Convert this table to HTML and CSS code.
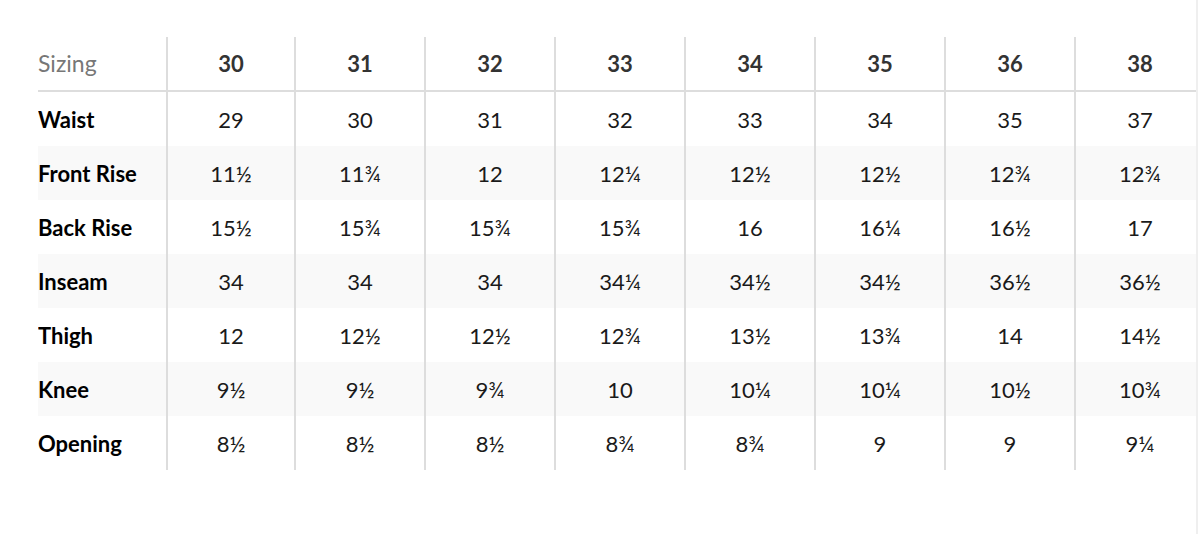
FILE: index.html
```html
<!DOCTYPE html>
<html lang="en">
<head>
<meta charset="utf-8">
<title>Sizing</title>
<link rel="stylesheet" href="styles.css">
</head>
<body>
<div class="page">
  <div class="wrap">
    <table class="size-table">
      <colgroup>
        <col class="c-label"><col class="c-first"><col class="c-num"><col class="c-num"><col class="c-num"><col class="c-num"><col class="c-num"><col class="c-num"><col class="c-num">
      </colgroup>
      <thead>
        <tr>
          <th class="label head-label">Sizing</th>
          <th>30</th><th>31</th><th>32</th><th>33</th><th>34</th><th>35</th><th>36</th><th>38</th>
        </tr>
      </thead>
      <tbody>
        <tr>
          <td class="label">Waist</td>
          <td>29</td><td>30</td><td>31</td><td>32</td><td>33</td><td>34</td><td>35</td><td>37</td>
        </tr>
        <tr>
          <td class="label">Front Rise</td>
          <td>11½</td><td>11¾</td><td>12</td><td>12¼</td><td>12½</td><td>12½</td><td>12¾</td><td>12¾</td>
        </tr>
        <tr>
          <td class="label">Back Rise</td>
          <td>15½</td><td>15¾</td><td>15¾</td><td>15¾</td><td>16</td><td>16¼</td><td>16½</td><td>17</td>
        </tr>
        <tr>
          <td class="label">Inseam</td>
          <td>34</td><td>34</td><td>34</td><td>34¼</td><td>34½</td><td>34½</td><td>36½</td><td>36½</td>
        </tr>
        <tr>
          <td class="label">Thigh</td>
          <td>12</td><td>12½</td><td>12½</td><td>12¾</td><td>13½</td><td>13¾</td><td>14</td><td>14½</td>
        </tr>
        <tr>
          <td class="label">Knee</td>
          <td>9½</td><td>9½</td><td>9¾</td><td>10</td><td>10¼</td><td>10¼</td><td>10½</td><td>10¾</td>
        </tr>
        <tr>
          <td class="label">Opening</td>
          <td>8½</td><td>8½</td><td>8½</td><td>8¾</td><td>8¾</td><td>9</td><td>9</td><td>9¼</td>
        </tr>
      </tbody>
    </table>
  </div>
</div>
</body>
</html>
```

FILE: styles.css
```css
html, body {
  margin: 0;
  padding: 0;
  background: #ffffff;
}

body {
  font-family: "Lato", "Liberation Sans", sans-serif;
  overflow: hidden;
}

.page {
  width: 1198px;
  height: 534px;
  border-right: 2px solid #efefef;
  overflow: hidden;
  padding-top: 37px;
  box-sizing: border-box;
}

.wrap {
  margin-left: 38px;
  width: 1160px;
  overflow: hidden;
}

.size-table {
  table-layout: fixed;
  border-collapse: separate;
  border-spacing: 0;
  width: 1166px;
}

.c-label { width: 128px; }
.c-first { width: 128px; }
.c-num { width: 130px; }

.size-table th,
.size-table td {
  box-sizing: border-box;
  padding: 0;
  text-align: center;
  vertical-align: middle;
  border-left: 2px solid #dddddd;
}

.size-table th {
  height: 55px;
  font-size: 22px;
  font-weight: 700;
  color: #333333;
  border-bottom: 2px solid #dddddd;
  padding-bottom: 1px;
}

.size-table td {
  height: 54px;
  font-size: 22px;
  font-weight: 400;
  color: #1a1a1a;
}

.size-table .label {
  text-align: left;
  border-left: none;
  font-weight: 700;
  color: #000000;
  white-space: nowrap;
}

.size-table .head-label {
  font-size: 23px;
  font-weight: 400;
  color: #777777;
}

.size-table tbody tr:nth-child(even) td {
  background: #f9f9f9;
}
```
